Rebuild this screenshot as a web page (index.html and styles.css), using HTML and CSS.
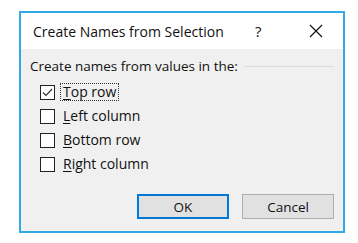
FILE: index.html
```html
<!DOCTYPE html>
<html>
<head>
<meta charset="utf-8">
<link rel="stylesheet" href="styles.css">
</head>
<body>
<div class="dialog">
  <div class="titlebar">
    <span class="title">Create Names from Selection</span>
    <span class="help">?</span>
    <span class="close">
      <svg width="14" height="14" viewBox="0 0 14 14"><path d="M1 1L13 13M13 1L1 13" stroke="#111" stroke-width="1.2" fill="none"/></svg>
    </span>
  </div>
  <div class="body">
    <div class="group-head">
      <span class="group-label">Create names from values in the:</span>
      <span class="group-line"></span>
    </div>
    <div class="options">
      <div class="opt">
        <span class="box">
          <svg width="13" height="13" viewBox="0 0 13 13"><path d="M2 6.5L5 9.5L11 3" stroke="#333" stroke-width="1.2" fill="none"/></svg>
        </span>
        <span class="lbl focus"><u>T</u>op row</span>
      </div>
      <div class="opt"><span class="box"></span><span class="lbl"><u>L</u>eft column</span></div>
      <div class="opt"><span class="box"></span><span class="lbl"><u>B</u>ottom row</span></div>
      <div class="opt"><span class="box"></span><span class="lbl"><u>R</u>ight column</span></div>
    </div>
    <div class="buttons">
      <button class="btn ok">OK</button>
      <button class="btn">Cancel</button>
    </div>
  </div>
</div>
</body>
</html>
```
FILE: styles.css
```css
html, body { margin: 0; padding: 0; background: #fff; }
body { padding: 11px 0 0 19px; font-family: "Open Sans", "Noto Sans", sans-serif; color: #111; }
.dialog {
  width: 322px; height: 218px;
  border: 2px solid #33a9e6;
  display: flex; flex-direction: column;
  background: #f0f0f0;
}
.titlebar {
  height: 36px; background: #fff;
  display: flex; align-items: center;
  padding-left: 12px;
  font-size: 14px;
}
.title { width: 222px; }
.help { width: 54px; font-size: 15px; }
.close { display: flex; align-items: center; }
.body { flex: 1; padding: 8px 9px 0 9px; display: flex; flex-direction: column; }
.group-head { display: flex; align-items: center; font-size: 13.5px; height: 18px; }
.group-line { flex: 1; height: 1px; background: #dcdcdc; margin-left: 6px; }
.options { padding: 8px 0 0 10px; display: flex; flex-direction: column; gap: 6px; }
.opt { display: flex; align-items: center; height: 18px; font-size: 14px; }
.box { width: 15px; height: 15px; border: 1px solid #222; background: #fff; box-sizing: border-box; display: flex; align-items: center; justify-content: center; margin-right: 5px; }
.box svg { display: block; }
.lbl { padding: 0 2px; border: 1px solid transparent; line-height: 16px; }
.lbl.focus { border: 1px dotted #333; }
.lbl u { text-decoration-thickness: 1px; text-underline-offset: 2px; }
.buttons { margin-top: auto; margin-bottom: 12px; display: flex; justify-content: flex-end; gap: 13px; }
.btn {
  width: 92px; height: 25px; font-family: inherit; font-size: 13.5px; color: #111;
  background: #e1e1e1; border: 1px solid #adadad; padding: 0; box-sizing: border-box;
}
.btn.ok { border: 2px solid #0078d7; }
```
